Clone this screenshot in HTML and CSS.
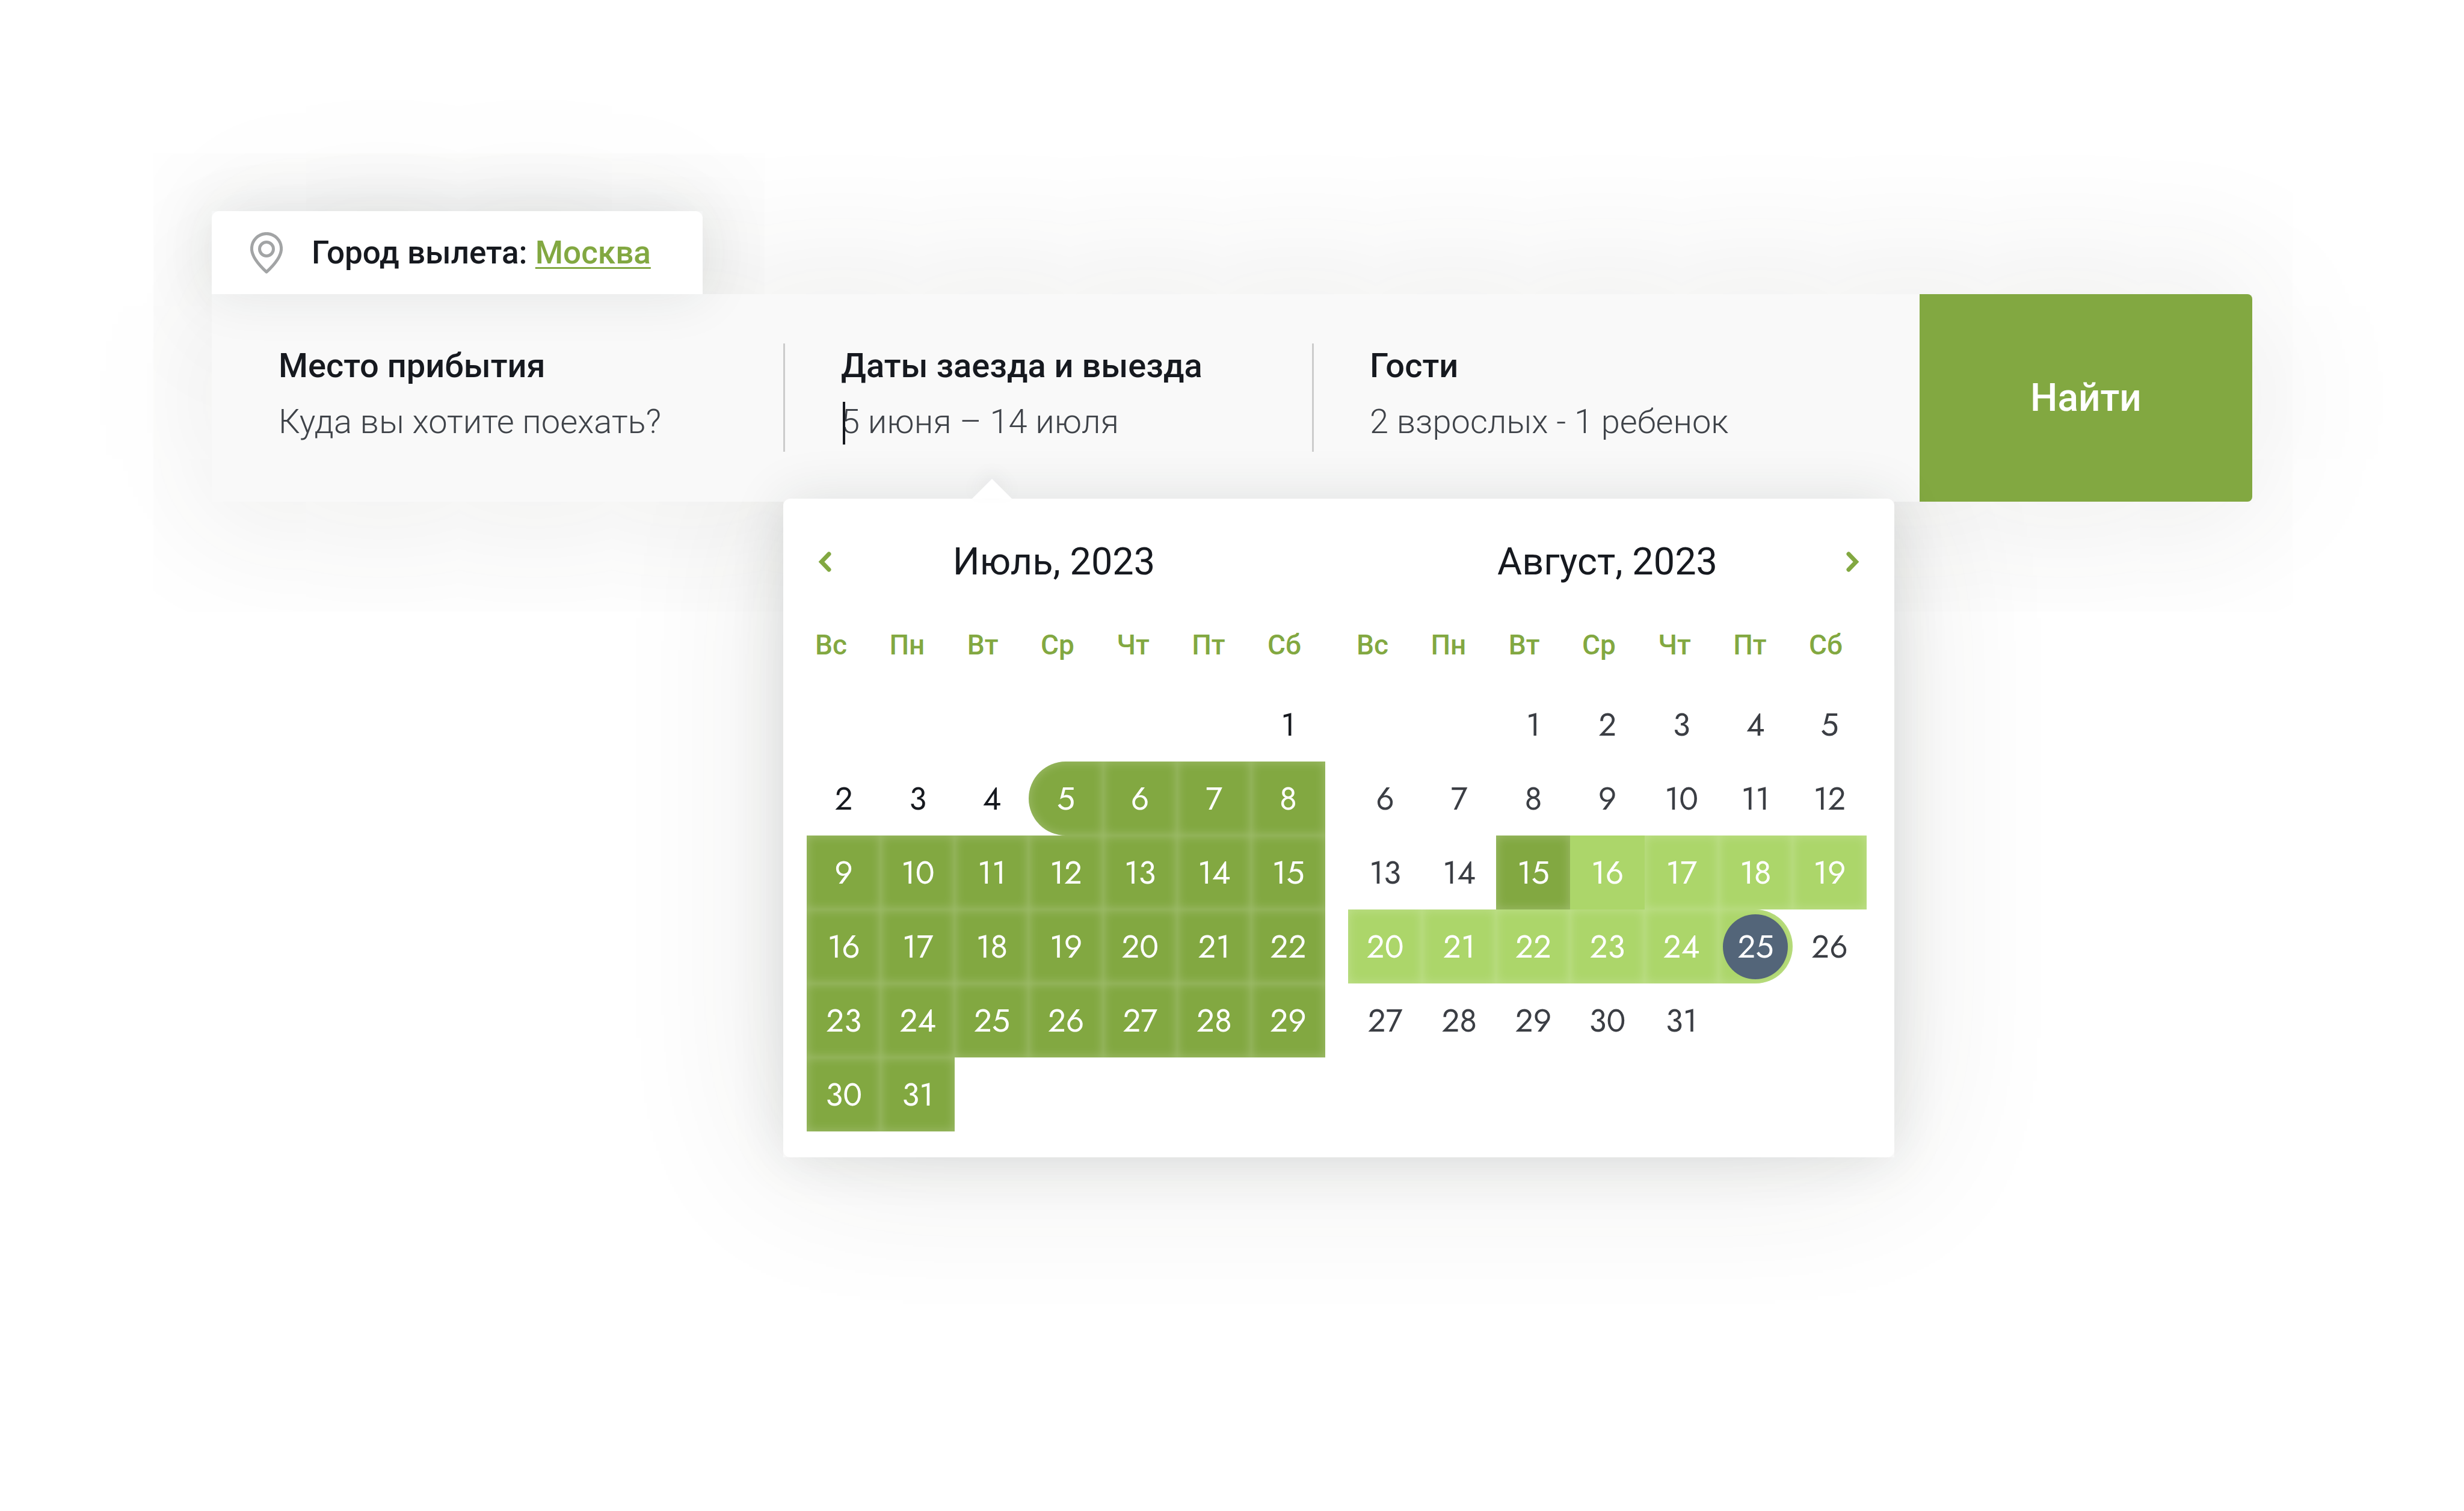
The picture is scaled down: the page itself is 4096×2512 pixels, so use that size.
FILE: index.html
```html
<!DOCTYPE html>
<html lang="ru">
<head>
<meta charset="utf-8">
<meta name="viewport" content="width=device-width, initial-scale=1">
<title>Поиск тура</title>
<link rel="stylesheet" href="styles.css">
</head>
<body>
<main class="page">
  <div class="city">
    <svg class="city-pin" viewBox="0 0 54 69" aria-hidden="true">
      <path d="M27 2.400C13.400 2.400 2.400 13.600 2.400 27.500 2.400 41 16 56 27 66.200 38 56 51.600 41 51.600 27.500 51.600 13.600 40.600 2.400 27 2.400Z"/>
      <circle cx="27" cy="28" r="11.500"/>
    </svg>
    <p class="city-text">Город вылета: <a class="city-link" href="#city">Москва</a></p>
  </div>
  <form class="search">
    <div class="field">
      <div class="field-body">
        <label class="field-label" for="place">Место прибытия</label>
        <input class="field-input" id="place" type="text" placeholder="Куда вы хотите поехать?">
      </div>
    </div>
    <div class="field">
      <div class="field-body">
        <label class="field-label" for="dates">Даты заезда и выезда</label>
        <input class="field-input" id="dates" type="text" value="5 июня – 14 июля">
        <span class="caret"></span>
      </div>
      <div class="calendar">
        <section class="month">
          <header class="month-head month-head-first">
            <button class="arrow" type="button" aria-label="Предыдущий месяц"><svg viewBox="0 0 22 34"><path d="M18 4 5.500 17 18 30"/></svg></button>
            <h2 class="month-title">Июль, 2023</h2>
          </header>
          <table class="days days-current">
            <thead><tr><th>Вс</th><th>Пн</th><th>Вт</th><th>Ср</th><th>Чт</th><th>Пт</th><th>Сб</th></tr></thead>
            <tbody>
              <tr><td></td><td></td><td></td><td></td><td></td><td></td><td>1</td></tr>
              <tr><td>2</td><td>3</td><td>4</td><td class="on first">5</td><td class="on">6</td><td class="on">7</td><td class="on">8</td></tr>
              <tr><td class="on">9</td><td class="on">10</td><td class="on">11</td><td class="on">12</td><td class="on">13</td><td class="on">14</td><td class="on">15</td></tr>
              <tr><td class="on">16</td><td class="on">17</td><td class="on">18</td><td class="on">19</td><td class="on">20</td><td class="on">21</td><td class="on">22</td></tr>
              <tr><td class="on">23</td><td class="on">24</td><td class="on">25</td><td class="on">26</td><td class="on">27</td><td class="on">28</td><td class="on">29</td></tr>
              <tr><td class="on">30</td><td class="on">31</td><td></td><td></td><td></td><td></td><td></td></tr>
            </tbody>
          </table>
        </section>
        <section class="month">
          <header class="month-head month-head-last">
            <h2 class="month-title">Август, 2023</h2>
            <button class="arrow" type="button" aria-label="Следующий месяц"><svg viewBox="0 0 22 34"><path d="M4 4 16.500 17 4 30"/></svg></button>
          </header>
          <table class="days">
            <thead><tr><th>Вс</th><th>Пн</th><th>Вт</th><th>Ср</th><th>Чт</th><th>Пт</th><th>Сб</th></tr></thead>
            <tbody>
              <tr><td></td><td></td><td>1</td><td>2</td><td>3</td><td>4</td><td>5</td></tr>
              <tr><td>6</td><td>7</td><td>8</td><td>9</td><td>10</td><td>11</td><td>12</td></tr>
              <tr><td>13</td><td>14</td><td class="on">15</td><td class="soft flat">16</td><td class="soft">17</td><td class="soft">18</td><td class="soft">19</td></tr>
              <tr><td class="soft">20</td><td class="soft">21</td><td class="soft">22</td><td class="soft">23</td><td class="soft">24</td><td class="soft last"><span class="today">25</span></td><td>26</td></tr>
              <tr><td>27</td><td>28</td><td>29</td><td>30</td><td>31</td><td></td><td></td></tr>
            </tbody>
          </table>
        </section>
      </div>
    </div>
    <div class="field">
      <div class="field-body">
        <label class="field-label" for="guests">Гости</label>
        <input class="field-input" id="guests" type="text" value="2 взрослых - 1 ребенок">
      </div>
    </div>
    <button class="submit" type="submit">Найти</button>
  </form>
</main>
</body>
</html>
```
FILE: styles.css
```css
:root {
  --green: #82a841;
  --light: #acd66a;
  --ink: #16191f;
  --text: #3f4349;
}

* { box-sizing: border-box; }

body {
  margin: 0;
  min-height: 100vh;
  background: #fff;
  color: var(--ink);
  font-family: Roboto, "Noto Sans", sans-serif;
  overflow-x: hidden;
}

.page { isolation: isolate; padding: 351px 352px; }

/* Departure city tab */
.city {
  position: relative;
  display: flex;
  align-items: center;
  gap: 48px;
  width: 816px;
  height: 138px;
  padding-left: 64px;
  background: #fff;
  border-radius: 12px 12px 0 0;
  box-shadow: 0 0 90px rgba(30, 50, 45, 0.1);
}

/* Wide glow, kept under the search bar */
.city::after,
.calendar::after {
  content: "";
  position: absolute;
  z-index: -1;
  inset: 0;
  box-shadow: 0 0 320px rgba(50, 50, 40, 0.12);
}

.city-pin {
  width: 54px;
  height: 69px;
  fill: none;
  stroke: #a2a4a5;
  stroke-width: 5;
  stroke-linejoin: round;
}

.city-text { margin: 0; font-size: 53px; font-weight: 500; line-height: 72px; }

.city-link {
  color: var(--green);
  text-decoration-thickness: 3px;
  text-underline-offset: 6px;
  text-decoration-skip-ink: none;
}

/* Search bar */
.search {
  display: grid;
  grid-template-columns: 950fr 879fr 1010fr 553fr;
  background: #f9f9f9;
  border-radius: 0 8px 8px 0;
  box-shadow: 0 0 320px rgba(50, 50, 40, 0.14);
}

.field { position: relative; padding: 82px 0 83px; }

.field-body {
  position: relative;
  display: flex;
  flex-direction: column;
  gap: 22px;
  height: 180px;
  padding-left: 93px;
  border-left: 3px solid #ccc;
}

.field:first-child .field-body { padding-left: 108px; border-color: transparent; }

.field-label { font-size: 56px; font-weight: 500; line-height: 74px; height: 72px; }

.field-input {
  width: 100%;
  height: 72px;
  padding: 0;
  border: 0;
  outline: 0;
  background: none;
  color: var(--text);
  font: 300 56px/72px Roboto, "Noto Sans", sans-serif;
}

.field-input::placeholder { color: var(--text); opacity: 1; }

.caret {
  position: absolute;
  left: 96px;
  top: 97px;
  width: 4px;
  height: 71px;
  background: var(--ink);
}

.submit {
  border: 0;
  border-radius: 0 8px 8px 0;
  background: var(--green);
  color: #fff;
  font: 500 64px/76px Roboto, "Noto Sans", sans-serif;
}

/* Calendar popover */
.calendar {
  position: absolute;
  top: calc(100% - 5px);
  left: 0;
  display: flex;
  gap: 38px;
  padding: 67px 46px 43px 39px;
  background: #fff;
  border-radius: 12px;
  box-shadow: 0 0 90px rgba(30, 50, 45, 0.12);
}

.calendar::before {
  content: "";
  position: absolute;
  bottom: 100%;
  left: 314px;
  border: 33px solid transparent;
  border-top: 0;
  border-bottom-color: #fff;
  filter: drop-shadow(0 -12px 12px rgba(30, 40, 60, 0.05));
}

.month { width: 862px; }

.month-head {
  display: grid;
  align-items: center;
  height: 76px;
  margin-bottom: 72px;
}

.month-head-first { grid-template-columns: 60px 1fr 100px; }
.month-head-last { grid-template-columns: 1fr 46px; padding-left: 46px; }

.month-title {
  margin: 0;
  font-size: 63px;
  font-weight: 400;
  line-height: 76px;
  text-align: center;
}

.arrow {
  display: grid;
  place-items: center;
  height: 76px;
  padding: 0;
  border: 0;
  background: none;
}

.arrow svg {
  width: 22px;
  height: 34px;
  fill: none;
  stroke: var(--green);
  stroke-width: 7;
  stroke-linecap: round;
}

.days, .days thead, .days tbody { display: block; }

.days thead tr {
  display: flex;
  justify-content: space-between;
  margin-bottom: 43px;
  padding: 0 40px 0 14px;
}

.days th {
  padding: 0;
  color: var(--green);
  font-size: 46px;
  font-weight: 500;
  line-height: 56px;
}

.days tbody tr { display: grid; grid-template-columns: repeat(7, 1fr); height: 123px; }

.days td {
  display: grid;
  place-items: center;
  padding: 0;
  color: #3b3e44;
  font: 400 53px/60px Jost, Roboto, sans-serif;
}

.days-current td { color: var(--ink); }

.days .on {
  background: var(--green);
  box-shadow: inset 0 0 18px rgba(255, 255, 255, 0.25);
  color: #fff;
}

.days .soft {
  background: var(--light);
  box-shadow: inset 0 0 18px rgba(255, 255, 255, 0.25);
  color: #fff;
}

.days .flat { box-shadow: none; }
.days .first { border-radius: 62px 0 0 62px; }
.days .last { border-radius: 0 62px 62px 0; }

.today {
  display: grid;
  place-items: center;
  width: 108px;
  height: 108px;
  border-radius: 50%;
  background: #536579;
}
```
